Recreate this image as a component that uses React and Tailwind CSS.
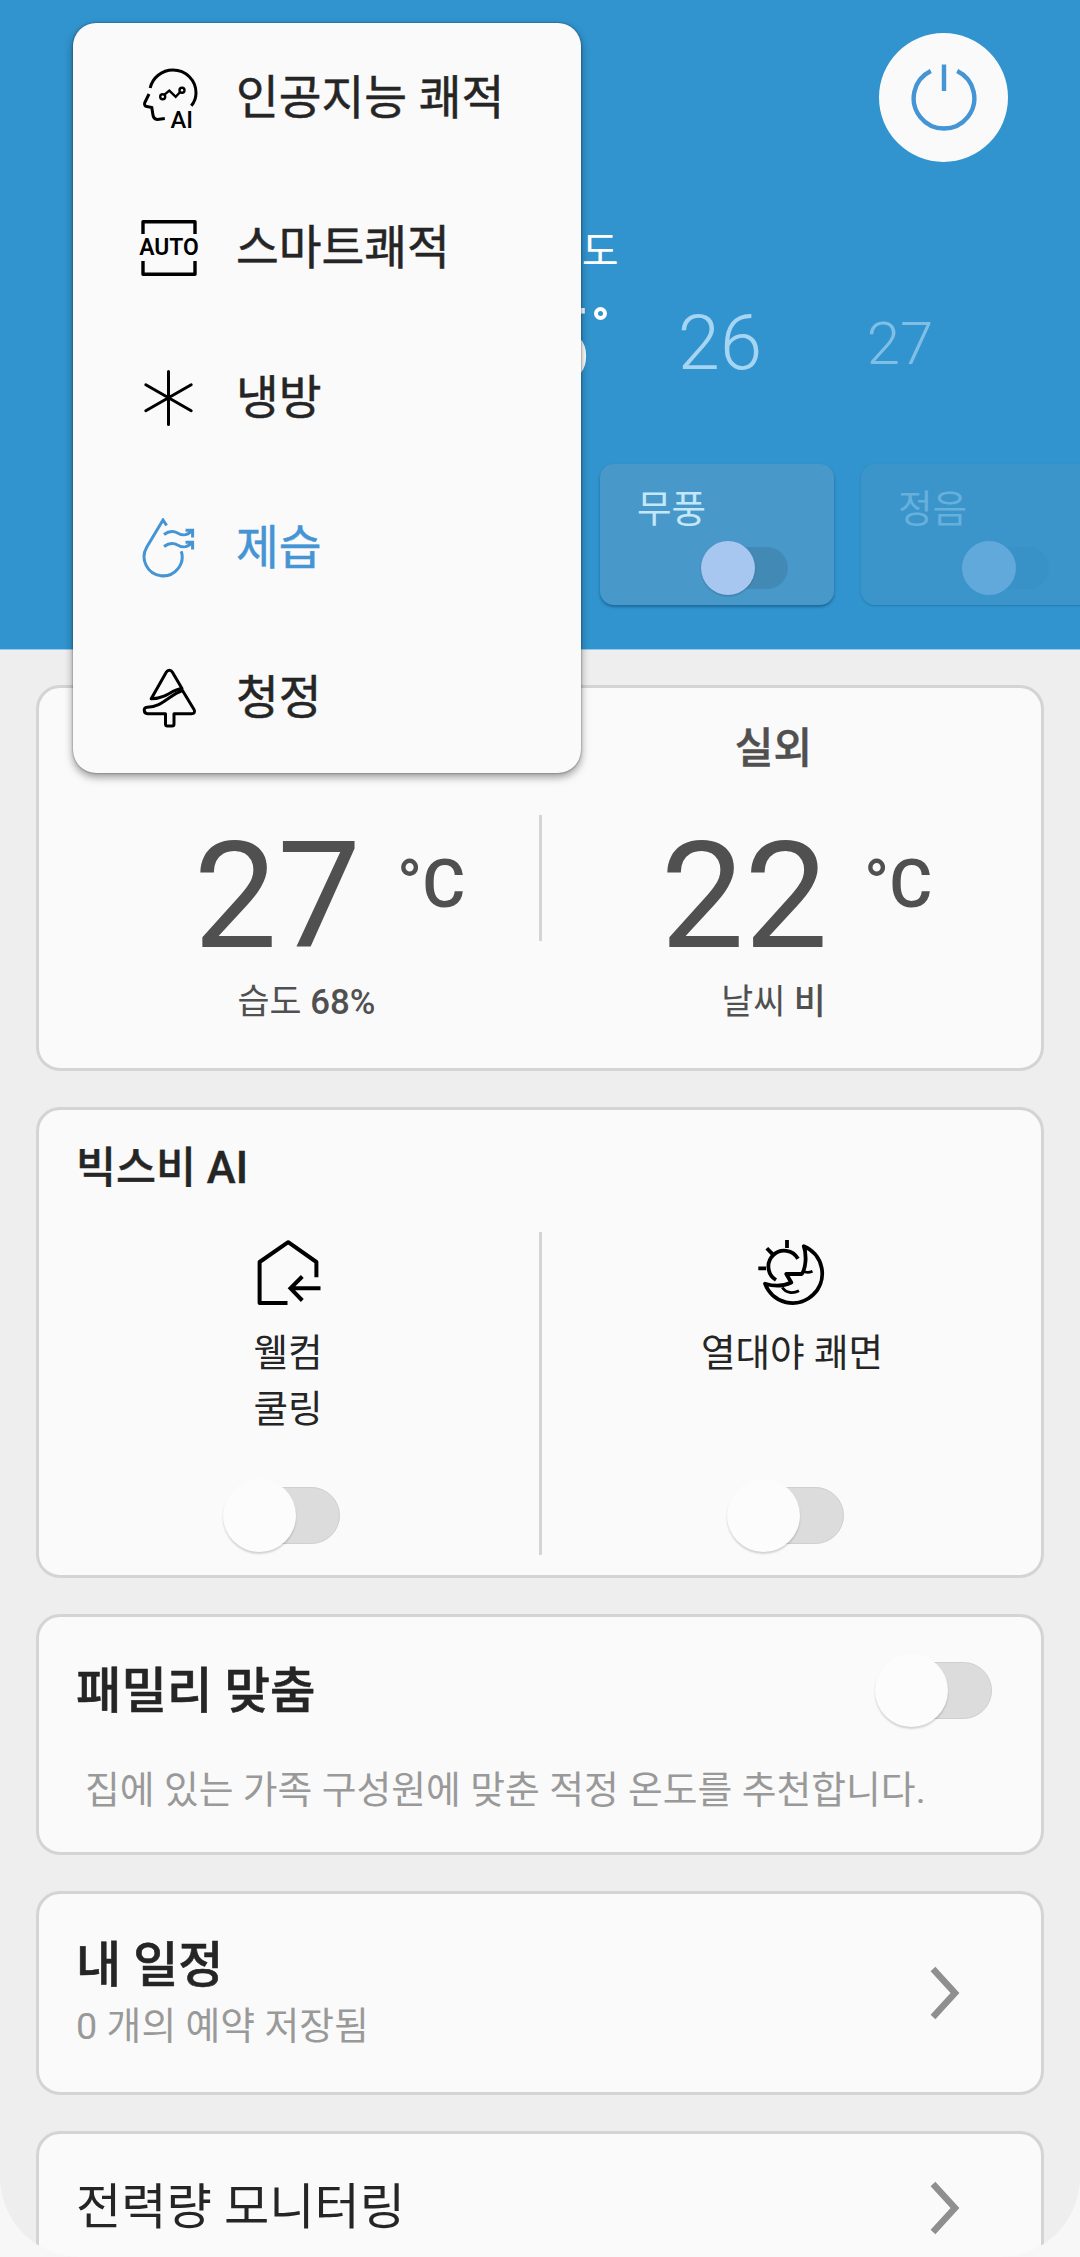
import React from 'react';

const AiIcon = () => (
  <svg className="w-15 h-15 overflow-visible" viewBox="0 0 60 60" fill="none" stroke="currentColor" strokeWidth="3">
    <path d="M12.2 20A23.3 23.3 0 0 1 35 2C48 2 58 12.5 58 25C58 30 56.5 34 53.3 37.8" />
    <path d="M11 26L6.8 34.5C6 36.5 7 38.3 9 38.6L13.8 39.5L14.8 46C15.2 50 16.5 51.5 19.5 51.4L26.8 50.6" />
    <circle cx="24.7" cy="28.7" r="2.5" strokeWidth="2.4" />
    <circle cx="44" cy="22.2" r="2.5" strokeWidth="2.4" />
    <path d="M26.5 26.6L31.3 22.6L37.7 28.8L42.2 24" strokeWidth="2.4" />
    <text x="32.5" y="60.3" textLength="22.5" lengthAdjust="spacingAndGlyphs" fontSize="23" fontWeight="500" fill="currentColor" stroke="none">AI</text>
  </svg>
);

const AutoIcon = () => (
  <svg className="w-15 h-15 overflow-visible" viewBox="0 0 60 60" fill="none" stroke="currentColor" strokeWidth="3.4">
    <path d="M5 16V3.7H57V16M5 43V56.3H57V43" strokeLinejoin="round" />
    <text x="1.2" y="37.4" textLength="59.6" lengthAdjust="spacingAndGlyphs" fontSize="23.5" fontWeight="600" fill="currentColor" stroke="none">AUTO</text>
  </svg>
);

const CoolIcon = () => (
  <svg className="w-15 h-15" viewBox="0 0 60 60" fill="none" stroke="currentColor" strokeWidth="3" strokeLinecap="round">
    <path d="M30.5 3.5V56.5M7.8 16.7L53.2 42.7M53.2 16.7L7.8 42.7" />
  </svg>
);

const DryIcon = () => (
  <svg className="w-15 h-15" viewBox="0 0 60 60" fill="none" stroke="currentColor" strokeWidth="3">
    <path d="M28.6 7.5L25 2L8.7 29.3A19 19 0 1 0 43.3 33.3" />
    <path d="M26 16.5C32 12 36 13 40 15.2C45 18 49 18 54 12.5M47.5 12.2H54.6V19.5" />
    <path d="M26 28.5C32 24 36 25 40 27.2C45 30 49 30 54 24.5M47.5 24.2H54.6V31.5" />
  </svg>
);

const PurifyIcon = () => (
  <svg className="w-15 h-15" viewBox="0 0 60 60" fill="none" stroke="currentColor" strokeWidth="3" strokeLinejoin="round">
    <path d="M13.2 30.8L28.4 4C29.8 1.5 33 1.5 34.3 4L44 20.6C37 21.5 32 25.5 26 28.2C22 30 18 30.8 13.2 30.8Z" />
    <path d="M44.5 22.5L56 41.5C57.5 44 56 45.7 53.5 45.7H36V56C36 57.3 35.3 58 34 58H29.5C28.3 58 27.5 57.3 27.5 56V45.7H9.5C5.5 45.7 5 39.3 9 39.2C24 39.5 31 27 44.5 22.5Z" />
  </svg>
);

const WelcomeIcon = () => (
  <svg className="w-16 h-16 overflow-visible" viewBox="0 0 64 64" fill="none" stroke="currentColor" strokeWidth="4">
    <path d="M31.5 63H3.6V22L32.2 2.2L60.4 22V37.3" strokeLinejoin="round" />
    <path d="M64.5 48.3H34.5M46.3 36.5L34.5 48.3L46.3 60.5" />
  </svg>
);

const SleepIcon = () => (
  <svg className="w-16 h-16 overflow-visible" viewBox="0 0 64 64" fill="none" stroke="currentColor" strokeWidth="3.8">
    <path d="M38 18.8A15.8 15.8 0 1 0 16 40" />
    <path d="M27 0V8M6.8 8.2L12.8 14.4M-1.7 28.3H6" />
    <path d="M43.8 6.2A29.5 29.5 0 1 1 5 43.7C14 46.5 24 46 31.3 42.5L26.3 34H41.8C46 28 46.8 15 43.8 6.2Z" strokeLinejoin="round" />
    <path d="M43 30.5C45.5 33 49 32.8 52.5 31.3M22.3 47.5C26 53.2 33 53.8 39 50.7" strokeWidth="2.8" />
  </svg>
);

const PowerIcon = () => (
  <svg className="w-[70px] h-[70px]" viewBox="0 0 70 70" fill="none" stroke="currentColor" strokeWidth="4.4">
    <path d="M21.8 7.9A30.3 30.3 0 1 0 48.2 7.9M35 1.5V28" />
  </svg>
);

const Chevron = () => (
  <svg className="w-8 h-[54px]" viewBox="0 0 32 54" fill="none" stroke="#8f8f8f" strokeWidth="6.5">
    <path d="M4 3L26 27L4 51" />
  </svg>
);

const modes = [
  { label: '인공지능 쾌적', icon: AiIcon },
  { label: '스마트쾌적', icon: AutoIcon },
  { label: '냉방', icon: CoolIcon },
  { label: '제습', icon: DryIcon, active: true },
  { label: '청정', icon: PurifyIcon },
];

const Toggle = () => (
  <div className="w-[117px] h-[73px] flex items-center">
    <div className="w-[73px] h-[73px] shrink-0 rounded-full bg-[#fcfcfc] shadow-[0_2px_2px_rgba(0,0,0,0.16)] z-10" />
    <div className="w-[88px] h-[57px] -ml-11 rounded-r-full bg-[#dcdcdc] border border-[#cfcfcf]" />
  </div>
);

const Card = ({ className, children }) => (
  <section className={`rounded-[24px] border-3 border-[#d4d4d4] bg-[#fafafa] ${className}`}>{children}</section>
);

const Reading = ({ title, value, label, detail }) => (
  <div className="flex-1 flex flex-col items-center text-[#505050]">
    <h3 className="text-[42px] leading-[60px] font-medium [-webkit-text-stroke:0.5px] mt-[31px]">{title}</h3>
    <div className="flex pl-[46px] mt-[37px] gap-[36px]">
      <span className="text-[149px] leading-[160px]">{value}</span>
      <span className="text-[66px] leading-[80px] mt-[29px] font-medium">°C</span>
    </div>
    <div className="text-[34.8px] leading-[50px] mt-[1px]">
      {label} <span className="font-medium">{detail}</span>
    </div>
  </div>
);

const Feature = ({ icon: Icon, lines }) => (
  <div className="w-[504px] flex flex-col items-center">
    <div className="text-black"><Icon /></div>
    <div className="h-[145px] mt-[21px] text-[37.6px] leading-[56px] text-center">
      {lines.map(line => (
        <p key={line}>{line}</p>
      ))}
    </div>
    <div className="pr-3.5 mt-[9px]"><Toggle /></div>
  </div>
);

const App = () => (
  <div className="w-[1080px] h-[2257px] overflow-hidden bg-[#f7f7f7] font-['Roboto','Noto_Sans_CJK_KR',sans-serif] text-[#252525]">
    <div className="relative h-full overflow-hidden rounded-b-[80px] bg-[#eee]">
      <header className="h-[650px] overflow-hidden bg-[#3194ce] border-b border-[#8fcdf0] text-white">
        <div className="flex justify-end pt-[33px] pr-[72px]">
          <button className="w-[129px] h-[129px] rounded-full bg-[#fafafa] text-[#4594d3] flex items-center justify-center">
            <PowerIcon />
          </button>
        </div>

        <div className="mt-[62px] text-center text-[40px] leading-[56px]">희망 온도</div>

        <div className="h-[120px] mt-[3px] pl-[450px] grid grid-cols-[180px_180px_180px] items-center text-center">
          <div className="h-[120px] flex justify-center text-[98px] leading-[124px] font-light">
            <span className="ml-[9px]">25</span>
            <span className="w-[13px] h-[13px] mt-[24px] ml-[4px] rounded-full border-4 border-white" />
          </div>
          <span className="text-[76px] font-light text-[#a6d5f3]">26</span>
          <span className="text-[60px] font-light text-[#7fbfe6] pt-[2px]">27</span>
        </div>

        <div className="flex gap-[27px] pl-[600px] mt-[61px]">
          <div className="w-[234px] h-[141px] shrink-0 rounded-[14px] bg-[#4898c9] shadow-[0_2px_3px_rgba(0,50,90,0.45)] px-[37px] pt-[17px]">
            <div className="text-[37.6px] leading-[56px] text-[#c4e8fa]">무풍</div>
            <div className="flex items-center ml-[64px] mt-1">
              <div className="w-[54px] h-[54px] rounded-full bg-[#a8c7f0] shadow-[0_1px_2px_rgba(0,0,0,0.2)] z-10" />
              <div className="w-[60px] h-[42px] -ml-[27px] rounded-r-full bg-[#428ab5]" />
            </div>
          </div>
          <div className="w-[234px] h-[141px] shrink-0 rounded-[14px] bg-[#3b94ca] shadow-[0_1px_2px_rgba(0,50,90,0.25)] px-[37px] pt-[17px]">
            <div className="text-[37.6px] leading-[56px] text-[#66b0dc]">정음</div>
            <div className="flex items-center ml-[64px] mt-1">
              <div className="w-[54px] h-[54px] rounded-full bg-[#61a8db] z-10" />
              <div className="w-[60px] h-[42px] -ml-[27px] rounded-r-full bg-[#3992c7]" />
            </div>
          </div>
        </div>
      </header>

      <main className="flex flex-col gap-9 px-9 pt-[35px]">
        <Card className="h-[386px] flex px-[34px]">
          <Reading title="실내" value="27" label="습도" detail="68%" />
          <div className="w-[3px] h-[126px] mt-[127px] -mx-[1.5px] bg-[#d4d4d4]" />
          <Reading title="실외" value="22" label="날씨" detail="비" />
        </Card>

        <Card className="h-[471px]">
          <h2 className="pl-[37px] pt-[29px] text-[43.5px] leading-[60px] font-medium [-webkit-text-stroke:0.4px]">빅스비 AI</h2>
          <div className="flex mt-[33px] -mx-[3px]">
            <div className="pt-2"><Feature icon={WelcomeIcon} lines={['웰컴', '쿨링']} /></div>
            <div className="w-[3px] h-[323px] -mx-[1.5px] bg-[#d4d4d4]" />
            <div className="pt-2"><Feature icon={SleepIcon} lines={['열대야 쾌면']} /></div>
          </div>
        </Card>

        <Card className="h-[241px] pl-[37px] pr-[49px] pt-[37px]">
          <div className="flex items-center justify-between">
            <h2 className="text-[49.4px] leading-[72px] font-medium [-webkit-text-stroke:0.6px]">패밀리 맞춤</h2>
            <Toggle />
          </div>
          <p className="pl-[9px] mt-[35px] text-[37.8px] leading-[56px] text-[#999]">
            집에 있는 가족 구성원에 맞춘 적정 온도를 추천합니다.
          </p>
        </Card>

        <Card className="h-[204px] flex items-center justify-between pl-[37px] pr-[80px]">
          <div>
            <h2 className="text-[49px] leading-[66px] font-medium [-webkit-text-stroke:0.6px] pt-px">내 일정</h2>
            <p className="text-[37.8px] leading-[55px] text-[#999]">0 개의 예약 저장됨</p>
          </div>
          <Chevron />
        </Card>

        <Card className="h-[204px] shrink-0 flex items-start justify-between pl-[37px] pr-[80px] pt-[36px]">
          <h2 className="text-[49.2px] leading-[75px]">전력량 모니터링</h2>
          <div className="mt-[11px]"><Chevron /></div>
        </Card>
      </main>

      {/* mode picker */}
      <ul className="absolute left-[73px] top-[23px] w-[508px] rounded-[23px] bg-[#fafafa] shadow-[0_0_2px_rgba(0,0,0,0.5),0_4px_9px_rgba(0,0,0,0.4)]">
        {modes.map(({ label, icon: Icon, active }) => (
          <li key={label} className={`h-[150px] flex items-center gap-[38px] pl-[65px] ${active ? 'text-[#4594d3]' : 'text-black'}`}>
            <Icon />
            <span className={`text-[46.5px] leading-[70px] [-webkit-text-stroke:0.5px] ${active ? '' : 'text-[#252525]'}`}>{label}</span>
          </li>
        ))}
      </ul>
    </div>
  </div>
);

export default App;
